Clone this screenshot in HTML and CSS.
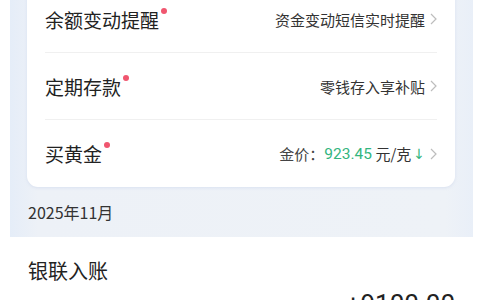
FILE: index.html
```html
<!DOCTYPE html>
<html lang="zh">
<head>
<meta charset="utf-8">
<link rel="stylesheet" href="styles.css">
</head>
<body>
<div class="panel">
  <div class="card">
    <div class="row">
      <div class="title">余额变动提醒<span class="dot"></span></div>
      <div class="right"><span>资金变动短信实时提醒</span><svg class="chev" viewBox="0 0 7 12"><polyline points="1,1 6,6 1,11"/></svg></div>
    </div>
    <div class="row">
      <div class="title">定期存款<span class="dot"></span></div>
      <div class="right"><span>零钱存入享补贴</span><svg class="chev" viewBox="0 0 7 12"><polyline points="1,1 6,6 1,11"/></svg></div>
    </div>
    <div class="row last">
      <div class="title">买黄金<span class="dot"></span></div>
      <div class="right"><span class="muted">金价：</span><span class="green num">923.45</span><span>&nbsp;元/克</span><span class="green arrow">↓</span><svg class="chev" viewBox="0 0 7 12"><polyline points="1,1 6,6 1,11"/></svg></div>
    </div>
  </div>
  <div class="date">2025年11月</div>
</div>
<div class="record">
  <div class="rec-title">银联入账</div>
  <div class="amount">+9100.00</div>
</div>
</body>
</html>
```
FILE: styles.css
```css
html, body {
  margin: 0;
  padding: 0;
  background: #ffffff;
  font-family: "Noto Sans CJK SC", "Noto Sans", sans-serif;
  color: #222;
  overflow: hidden;
}
.panel {
  margin-left: 10px;
  width: 463px;
  box-sizing: border-box;
  padding: 0 18px 0 17px;
  background: linear-gradient(90deg, #e5edf8 0%, #edf1f7 6%, #eef2f7 94%, #e9eff8 100%);
}
.card {
  margin-top: -14px;
  background: #fff;
  border-radius: 0 0 11px 11px;
  box-shadow: 0 1px 3px rgba(180, 195, 225, 0.35);
}
.row {
  height: 67px;
  margin: 0 18px 0 18px;
  border-bottom: 1px solid #f0f0f0;
  box-sizing: border-box;
  display: flex;
  align-items: center;
  justify-content: space-between;
}
.row.last {
  border-bottom: none;
}
.title {
  font-size: 19px;
  color: #222;
  position: relative;
  line-height: 1;
}
.dot {
  position: absolute;
  right: -8px;
  top: -2px;
  width: 6px;
  height: 6px;
  border-radius: 50%;
  background: #f0566f;
}
.right {
  display: flex;
  align-items: center;
  font-size: 15px;
  color: #333;
}
.muted { color: #444; }
.green { color: #33b57e; }
.num { font-family: "Roboto", "Liberation Sans", sans-serif; font-size: 15.5px; }
.arrow {
  margin-left: 2px;
  font-family: "DejaVu Sans", sans-serif;
  font-size: 14px;
}
.chev {
  width: 7px;
  height: 12px;
  margin-left: 5px;
  fill: none;
  stroke: #bdbdbd;
  stroke-width: 1.2;
}
.date {
  height: 50px;
  display: flex;
  align-items: center;
  padding-left: 1px;
  font-size: 16px;
  color: #333;
}
.record {
  padding: 20px 25px 0 28px;
}
.rec-title {
  font-size: 20px;
  color: #222;
  line-height: 28px;
}
.amount {
  text-align: right;
  font-family: "Roboto", "Liberation Sans", sans-serif;
  font-size: 26px;
  line-height: 30px;
  color: #222;
  margin-top: 4px;
}
```
